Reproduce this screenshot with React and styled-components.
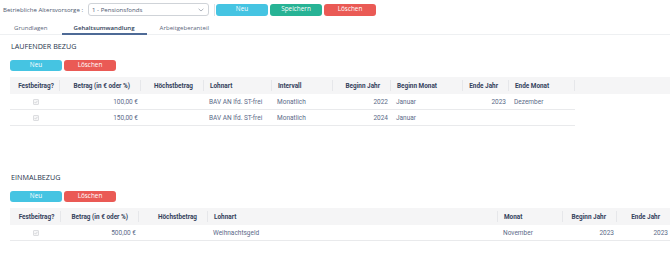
import React from "react";
import styled, { createGlobalStyle } from "styled-components";

const Global = createGlobalStyle`
  html, body { margin: 0; padding: 0; background: #fff; overflow: hidden; }
  body { font-family: Roboto, "Open Sans", sans-serif; width: 670px; }
  * { box-sizing: border-box; }
`;

const Page = styled.div`
  width: 670px;
  height: 265px;
  overflow: hidden;
`;

const TopBar = styled.div`
  display: flex;
  align-items: center;
  height: 17px;
  padding: 2px 0 0 3px;
`;

const Label = styled.span`
  font-family: "Open Sans", sans-serif;
  font-size: 6.1px;
  color: #4d5870;
  margin-right: 5px;
  white-space: nowrap;
`;

const Select = styled.div`
  width: 121px;
  height: 13px;
  border: 1px solid #cfd3d8;
  border-radius: 3px;
  display: flex;
  align-items: center;
  justify-content: space-between;
  padding: 0 4px 0 3px;
  font-family: "Open Sans", sans-serif;
  font-size: 6.1px;
  color: #4d5870;
`;

const Divider = styled.div`
  width: 1px;
  height: 12px;
  background: #dfe2e6;
  margin: 0 0 0 5px;
`;

const Btn = styled.button`
  width: 52px;
  height: ${(p) => p.$h || 12}px;
  border: none;
  border-radius: 3px;
  margin-left: ${(p) => p.$ml ?? 2}px;
  padding: 0;
  background: ${(p) => p.$bg};
  color: #fff;
  font-family: "Open Sans", sans-serif;
  font-size: 6.4px;
  line-height: 1;
  display: flex;
  align-items: center;
  justify-content: center;
`;

const Tabs = styled.div`
  display: flex;
  height: 18px;
  border-bottom: 1px solid #eef0f2;
`;

const Tab = styled.div`
  padding: 6px ${(p) => p.$px}px 0;
  line-height: 10px;
  height: 18px;
  font-family: "Open Sans", sans-serif;
  font-size: 6.1px;
  color: ${(p) => (p.$active ? "#2e3c55" : "#5d677c")};
  font-weight: ${(p) => (p.$active ? 600 : 400)};
  border-bottom: 2px solid ${(p) => (p.$active ? "#4e6a96" : "transparent")};
  white-space: nowrap;
`;

const Section = styled.section`
  padding-left: 10px;
  margin-top: ${(p) => p.$mt}px;
`;

const Heading = styled.h2`
  margin: 0;
  height: 10px;
  line-height: 10px;
  font-family: "Open Sans", sans-serif;
  font-size: 7.2px;
  font-weight: 500;
  color: #27344c;
  padding-left: 1px;
`;

const ButtonRow = styled.div`
  display: flex;
  margin-top: 9px;
  margin-bottom: 6px;
`;

const Table = styled.div`
  display: grid;
  grid-template-columns: ${(p) => p.$cols};
  width: max-content;
`;

const HeadCell = styled.div`
  height: 17px;
  background: #f5f5f6;
  display: flex;
  align-items: center;
  justify-content: ${(p) =>
    p.$align === "right" ? "flex-end" : p.$align === "center" ? "center" : "flex-start"};
  padding: ${(p) => (p.$align === "right" ? "0 11px 0 0" : p.$align === "center" ? "0 0 0 2px" : "0 0 0 6px")};
  font-size: 6.4px;
  font-weight: 700;
  color: #33415c;
  white-space: nowrap;
  position: relative;
  &::after {
    content: "";
    display: ${(p) => (p.$last ? "none" : "block")};
    position: absolute;
    right: 0;
    top: 3px;
    bottom: 3px;
    width: 1px;
    background: #e6e7ea;
  }
`;

const Cell = styled.div`
  height: 16px;
  border-bottom: 1px solid #e9eaec;
  display: flex;
  align-items: center;
  justify-content: ${(p) =>
    p.$align === "right" ? "flex-end" : p.$align === "center" ? "center" : "flex-start"};
  padding: ${(p) => (p.$align === "right" ? "0 3px 0 0" : p.$align === "center" ? "0 0 0 1px" : "0 0 0 5px")};
  font-size: 6.5px;
  color: #5b6a88;
  white-space: nowrap;
`;

const Spacer = styled.div``;

const Check = styled.span`
  width: 6px;
  height: 6px;
  border: 1px solid #dcdde0;
  border-radius: 1px;
  background: #f7f7f8;
  display: inline-flex;
  align-items: center;
  justify-content: center;
`;

const Chevron = () => (
  <svg width="6" height="4" viewBox="0 0 6 4">
    <path d="M0.6 0.8 L3 3 L5.4 0.8" fill="none" stroke="#9aa1ad" strokeWidth="0.8" />
  </svg>
);

const CheckBox = () => (
  <Check>
    <svg width="4" height="4" viewBox="0 0 4 4">
      <path d="M0.5 2 L1.6 3.1 L3.5 0.8" fill="none" stroke="#c9cbcf" strokeWidth="0.7" />
    </svg>
  </Check>
);

const laufCols = [
  { key: "fest", label: "Festbeitrag?", w: 50, align: "center", dalign: "center" },
  { key: "betrag", label: "Betrag (in € oder %)", w: 81, align: "right", dalign: "right" },
  { key: "hoechst", label: "Höchstbetrag", w: 63, align: "right", dalign: "right" },
  { key: "lohnart", label: "Lohnart", w: 68, align: "left", dalign: "left" },
  { key: "intervall", label: "Intervall", w: 61, align: "left", dalign: "left" },
  { key: "bj", label: "Beginn Jahr", w: 58, align: "right", dalign: "right" },
  { key: "bm", label: "Beginn Monat", w: 72, align: "left", dalign: "left" },
  { key: "ej", label: "Ende Jahr", w: 46, align: "right", dalign: "right" },
  { key: "em", label: "Ende Monat", w: 66, align: "left", dalign: "left" },
];

const laufRows = [
  { fest: true, betrag: "100,00 €", hoechst: "", lohnart: "BAV AN lfd. ST-frei", intervall: "Monatlich", bj: "2022", bm: "Januar", ej: "2023", em: "Dezember" },
  { fest: true, betrag: "150,00 €", hoechst: "", lohnart: "BAV AN lfd. ST-frei", intervall: "Monatlich", bj: "2024", bm: "Januar", ej: "", em: "" },
];

const einCols = [
  { key: "fest", label: "Festbeitrag?", w: 51, align: "center", dalign: "center" },
  { key: "betrag", label: "Betrag (in € oder %)", w: 78, align: "right", dalign: "right" },
  { key: "hoechst", label: "Höchstbetrag", w: 69, align: "right", dalign: "right" },
  { key: "lohnart", label: "Lohnart", w: 290, align: "left", dalign: "left" },
  { key: "monat", label: "Monat", w: 65, align: "left", dalign: "left" },
  { key: "bj", label: "Beginn Jahr", w: 54, align: "right", dalign: "right" },
  { key: "ej", label: "Ende Jahr", w: 54, align: "right", dalign: "right" },
];

const einRows = [
  { fest: true, betrag: "500,00 €", hoechst: "", lohnart: "Weihnachtsgeld", monat: "November", bj: "2023", ej: "2023" },
];

function DataTable({ cols, rows, filler }) {
  const template = cols.map((c) => `${c.w}px`).join(" ") + (filler ? ` ${filler}px` : "");
  return (
    <Table $cols={template}>
      {cols.map((c, i) => (
        <HeadCell key={c.key} $align={c.align} $last={!filler && i === cols.length - 1}>
          {c.label}
        </HeadCell>
      ))}
      {filler ? <HeadCell $last /> : null}
      {rows.map((r, ri) => (
        <React.Fragment key={ri}>
          {cols.map((c) => (
            <Cell key={c.key} $align={c.dalign}>
              {c.key === "fest" ? r.fest && <CheckBox /> : r[c.key]}
            </Cell>
          ))}
          {filler ? <Spacer /> : null}
        </React.Fragment>
      ))}
    </Table>
  );
}

export default function App() {
  return (
    <Page>
      <Global />
      <TopBar>
        <Label>Betriebliche Altersvorsorge :</Label>
        <Select>
          <span>1 - Pensionsfonds</span>
          <Chevron />
        </Select>
        <Divider />
        <Btn $bg="#45c4e2" $ml={1}>Neu</Btn>
        <Btn $bg="#27b395">Speichern</Btn>
        <Btn $bg="#ea5a55">Löschen</Btn>
      </TopBar>
      <Tabs>
        <Tab $px={14}>Grundlagen</Tab>
        <Tab $px={12} $active>Gehaltsumwandlung</Tab>
        <Tab $px={13}>Arbeitgeberanteil</Tab>
      </Tabs>

      <Section $mt={6}>
        <Heading>LAUFENDER BEZUG</Heading>
        <ButtonRow>
          <Btn $bg="#45c4e2" $ml={0} $h={11}>Neu</Btn>
          <Btn $bg="#ea5a55" $h={11}>Löschen</Btn>
        </ButtonRow>
        <DataTable cols={laufCols} rows={laufRows} filler={95} />
      </Section>

      <Section $mt={46}>
        <Heading>EINMALBEZUG</Heading>
        <ButtonRow>
          <Btn $bg="#45c4e2" $ml={0} $h={11}>Neu</Btn>
          <Btn $bg="#ea5a55" $h={11}>Löschen</Btn>
        </ButtonRow>
        <DataTable cols={einCols} rows={einRows} />
      </Section>
    </Page>
  );
}
